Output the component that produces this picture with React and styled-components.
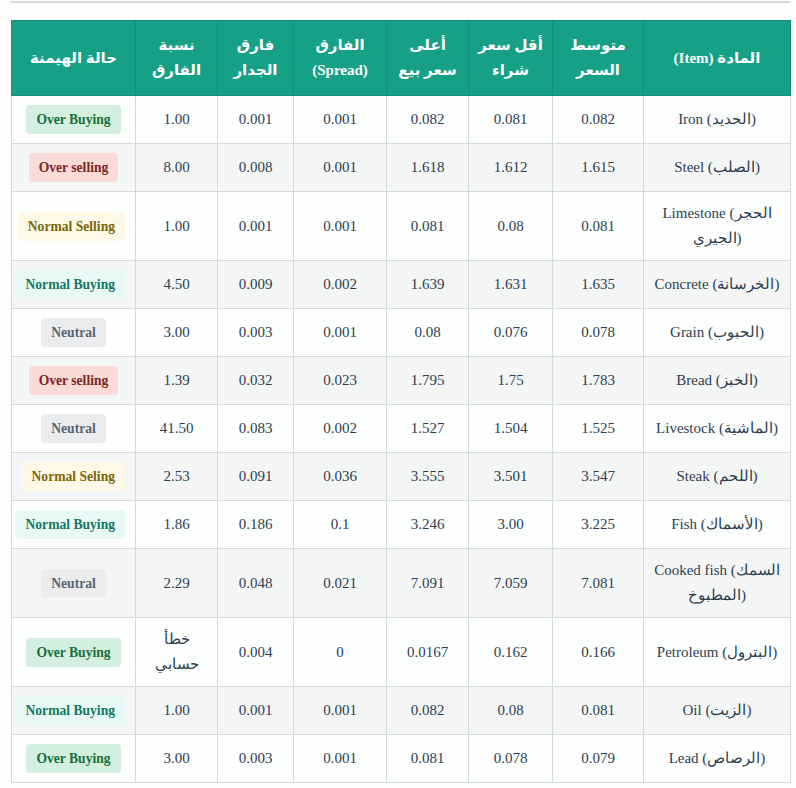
import React from 'react'
import styled, { createGlobalStyle } from 'styled-components'

const COLS = [147, 91, 84, 82, 93, 76, 82, 124]

const HEADERS = [
  'المادة (Item)',
  'متوسط السعر',
  'أقل سعر شراء',
  'أعلى سعر بيع',
  'الفارق (Spread)',
  'فارق الجدار',
  'نسبة الفارق',
  'حالة الهيمنة',
]

const ROWS = [
  ['Iron (الحديد)', '0.082', '0.081', '0.082', '0.001', '0.001', '1.00', 'Over Buying', 'overBuy'],
  ['Steel (الصلب)', '1.615', '1.612', '1.618', '0.001', '0.008', '8.00', 'Over selling', 'overSell'],
  ['Limestone (الحجر الجيري)', '0.081', '0.08', '0.081', '0.001', '0.001', '1.00', 'Normal Selling', 'normalSell'],
  ['Concrete (الخرسانة)', '1.635', '1.631', '1.639', '0.002', '0.009', '4.50', 'Normal Buying', 'normalBuy'],
  ['Grain (الحبوب)', '0.078', '0.076', '0.08', '0.001', '0.003', '3.00', 'Neutral', 'neutral'],
  ['Bread (الخبز)', '1.783', '1.75', '1.795', '0.023', '0.032', '1.39', 'Over selling', 'overSell'],
  ['Livestock (الماشية)', '1.525', '1.504', '1.527', '0.002', '0.083', '41.50', 'Neutral', 'neutral'],
  ['Steak (اللحم)', '3.547', '3.501', '3.555', '0.036', '0.091', '2.53', 'Normal Seling', 'normalSell'],
  ['Fish (الأسماك)', '3.225', '3.00', '3.246', '0.1', '0.186', '1.86', 'Normal Buying', 'normalBuy'],
  ['Cooked fish (السمك المطبوخ)', '7.081', '7.059', '7.091', '0.021', '0.048', '2.29', 'Neutral', 'neutral'],
  ['Petroleum (البترول)', '0.166', '0.162', '0.0167', '0', '0.004', 'خطأ حسابي', 'Over Buying', 'overBuy'],
  ['Oil (الزيت)', '0.081', '0.08', '0.082', '0.001', '0.001', '1.00', 'Normal Buying', 'normalBuy'],
  ['Lead (الرصاص)', '0.079', '0.078', '0.081', '0.001', '0.003', '3.00', 'Over Buying', 'overBuy'],
]

// badge colours per state
const BADGE = {
  overBuy: { bg: '#d4efdf', fg: '#196f3d' },
  overSell: { bg: '#fadbd8', fg: '#78281f' },
  normalSell: { bg: '#fef9e7', fg: '#7d6608' },
  normalBuy: { bg: '#e8f8f5', fg: '#117864' },
  neutral: { bg: '#eaecee', fg: '#566573' },
}

const Global = createGlobalStyle`
  body {
    margin: 0;
    background: #fdfdfd;
    font-family: "Liberation Serif", serif;
  }
`

const Page = styled.div`
  padding: 1px 6px 0 11px;
`

const Rule = styled.div`
  border-top: 2px solid #d3d8dc;
  margin-bottom: 17px;
`

const Table = styled.table`
  direction: rtl;
  width: 779px;
  table-layout: fixed;
  border-collapse: collapse;
  font-size: 15px;
  color: #2c3e50;
`

const Head = styled.th`
  background: #16a085;
  color: #fff;
  font-family: "Liberation Serif", "DejaVu Sans", serif;
  font-weight: bold;
  font-size: 15px;
  line-height: 25px;
  padding: 12px 5px;
  text-align: center;
  border: 1px solid #138d75;
`

const Row = styled.tr`
  background: ${p => (p.$even ? '#f4f6f6' : '#fdfefe')};
`

const Cell = styled.td`
  padding: 9px 10px;
  line-height: 25px;
  text-align: center;
  border: 1px solid #d5dbdb;
  direction: ${p => (p.$ltr ? 'ltr' : 'rtl')};
`

const Badge = styled.span`
  display: inline-block;
  vertical-align: middle;
  padding: 4px 10px;
  line-height: 21px;
  font-size: 13.6px;
  font-weight: bold;
  border-radius: 4px;
  white-space: nowrap;
  background: ${p => BADGE[p.$kind].bg};
  color: ${p => BADGE[p.$kind].fg};
`

export default function App() {
  return (
    <Page>
      <Global />
      <Rule />
      <Table>
        <colgroup>
          {COLS.map((w, i) => <col key={i} style={{ width: w }} />)}
        </colgroup>
        <thead>
          <tr>
            {HEADERS.map(h => <Head key={h}>{h}</Head>)}
          </tr>
        </thead>
        <tbody>
          {ROWS.map((r, i) => {
            const [item, ...vals] = r
            const kind = vals.pop()
            const state = vals.pop()
            return (
              <Row key={item} $even={i % 2 === 1}>
                <Cell $ltr>{item}</Cell>
                {vals.map((v, j) => <Cell key={j}>{v}</Cell>)}
                <Cell><Badge $kind={kind}>{state}</Badge></Cell>
              </Row>
            )
          })}
        </tbody>
      </Table>
    </Page>
  )
}
